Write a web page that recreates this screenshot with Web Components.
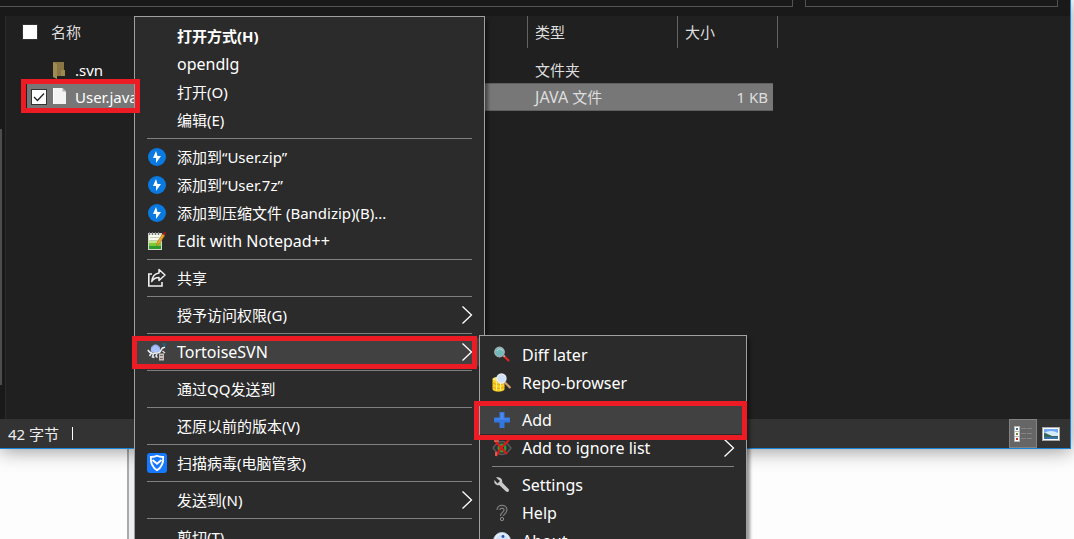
<!DOCTYPE html>
<html lang="zh-CN">
<head>
<meta charset="utf-8">
<title>文件资源管理器</title>
<style>
html, body { height: 100%; margin: 0; }
body {
  overflow: hidden;
  background: #fdfdfd;
  font: 15px/20px "Noto Sans", "Noto Sans CJK SC", sans-serif;
  color: #fff;
}
</style>
</head>
<body>
<desktop-view></desktop-view>

<script>
const ICONS = {
  zip: `<circle cx="10" cy="10" r="9" fill="#0a7ae0"/><path d="M9 4 6 11h3v5l5-7h-3.500z" fill="#fff"/>`,
  notepad: `<path d="M1 2h14v17H1z" fill="#d5d8d0"/><path d="M2 4h12v14H2z" fill="#f8fbee"/><path d="M2 9h12v4H2z" fill="#c6e88a"/><path d="M2 12h12v3H2z" fill="#7cc93c"/><path d="M2 15h12v3H2z" fill="#2f9a2c"/><path d="M3 6.500h9M3 9.500h8" stroke="#c3cdb8"/><path d="M2.500 1v3M5.500 1v3M8.500 1v3M11.500 1v3" stroke="#777"/><path d="m9.500 15 .8-4 5.200-8 2.200 1.500-5.200 8z" fill="#efa72b" stroke="#a06a1a" stroke-width=".6"/><path d="m15.800 2.800 1.300-1.900L19.200 2l-1.400 2.200z" fill="#b5161f"/>`,
  share: `<path d="M5 6H1.800v12H15v-4" fill="none" stroke="#eee" stroke-width="1.600"/><path d="M12 1.500 18 7l-6 5.500V9.500c-3.500 0-5.500 1-7.200 4C5.300 8.500 8 5.500 12 5z" fill="none" stroke="#eee" stroke-width="1.500" stroke-linejoin="round"/>`,
  tortoise: `<path d="M4 9.500C3 5 5.500 2.800 8.500 2.800S14 5 13 9.500L8.500 11z" fill="#a9c2fb"/><path d="M4.500 6.500C5.500 4 7 3 8.500 3s3 1 4 3.500" fill="none" stroke="#7f9ae0"/><path d="M.8 8c1 1.700 2 2.500 4 3 3 .6 6 .4 8-.8l2.500-4L18 5" fill="none" stroke="#eef1f5" stroke-width="1.500"/><path d="M4.500 11 2.500 14M6.500 11.500 5.500 15l2 .5M10 12l-1 2 1.500 1.500" fill="none" stroke="#e3e6ec" stroke-width="1.600"/><path d="m15.500 2 1-1.200 2.500.5-.5 3-2 .5z" fill="#23607e"/><path d="m15.500 9 2.500 2" stroke="#dfe5ee" stroke-width="1.300"/><path d="M12 11.500h5v7h-5z" fill="#c9c0bd"/><path d="M13 13.500h3m-3 3h3" stroke="#786d69"/>`,
  shield: `<rect width="20" height="20" rx="3" fill="#1677ff"/><path d="M10 2.800c2 1 4 1.300 6.200 1.200.3 6-1.600 10.500-6.200 13.200C5.400 14.500 3.500 10 3.800 4 6 4.100 8 3.800 10 2.800z" fill="none" stroke="#fff" stroke-width="1.800"/><path d="m5.500 7 4.500 3.800L14.500 7" fill="none" stroke="#fff" stroke-width="2"/>`,
  diff: `<circle cx="7.500" cy="7" r="4.800" fill="#72b9bc" stroke="#a9b0b1" stroke-width="1.200"/><path d="M5 6c1-2.500 4-3 6 0" fill="none" stroke="#bde1e2"/><path d="m12 11 5 5" stroke="#e32620" stroke-width="2.200"/><path d="m11.500 10.500 1.300 1.300" stroke="#aaa" stroke-width="2"/>`,
  repo: `<path d="M.5 6v10c0 3.500 12 3.500 12 0V6z" fill="#f9ce25"/><ellipse cx="6.500" cy="6" rx="6" ry="2.200" fill="#ffe978"/><path d="M.5 9.500c1.500 2.500 10.500 2.500 12 0M.5 13.500c1.500 2.500 10.500 2.500 12 0" fill="none" stroke="#dba813"/><path d="M4.500 8.500v9M8.500 8.500v9" stroke="#ffed85"/><path d="m13 9.500 5.500 5.500" stroke="#d0a072" stroke-width="2.200"/><circle cx="9.500" cy="5.500" r="4.500" fill="#cfe0fb" stroke="#eaedf0" stroke-width="1.300"/>`,
  add: `<path d="M7.500 2h5v5.500H18v5h-5.500V18h-5v-5.500H2v-5h5.500z" fill="#3277df"/><path d="M8.500 3h3v5.500H17v1H3v-1h5.500z" fill="#4f88ea"/>`,
  ignore: `<path d="M1 10q9-13 18 0-9 13-18 0z" fill="#303030" stroke="#595959" stroke-width="1.400"/><circle cx="10" cy="10" r="4.500" fill="#1fa03c"/><circle cx="10" cy="10" r="2.200" fill="#173b20"/><path d="m3 3 12 13M17 2 9 10l-5 8" fill="none" stroke="#e11919" stroke-width="2.200"/><path d="M2 3h5M4 14v4" stroke="#ef6b5b" stroke-width="1.600"/>`,
  wrench: `<path d="M4 2.500 8 6 5.500 8.500 2.500 5c-1 3 1.500 6 5 5.200l6.500 6.300c2 1.500 4-.8 2.500-2.500L10.200 7.500C11 4 7.500 1.500 4 2.500z" fill="#c9c9c9"/>`,
  help: `<path d="M6.500 7c0-4.500 7-4.500 7 0 0 3-3.500 3-3.500 6" fill="none" stroke="#8a8a8a" stroke-width="4"/><path d="M6.500 7c0-4.500 7-4.500 7 0 0 3-3.500 3-3.500 6" fill="none" stroke="#353535" stroke-width="2"/><circle cx="10" cy="16" r="1.700" fill="#353535" stroke="#8a8a8a"/>`,
  info: `<circle cx="10" cy="10" r="8.500" fill="#e9f1fb" stroke="#b7cbe5"/><circle cx="10" cy="10" r="6.500" fill="#cfe0f8"/><circle cx="11" cy="5.500" r="1.400" fill="#1d50bd"/><path d="M8 9h2.500L9 15h3" fill="none" stroke="#1d50bd" stroke-width="2"/>`,
  folder: `<path d="M3 2h11v14H3z" fill="#8a7642"/><path d="m3 2 4 2v15l-4-2z" fill="#a18b55"/><path d="M11 10h4v6h-4z" fill="#9e884e"/>`,
  file: `<path d="M3 1h9.500L16 4.500V17H3z" fill="#f3f3f3"/><path d="M12.500 1v3.500H16z" fill="#aeb2b5"/><path d="M3 1h1v16H3z" fill="#fff"/>`,
  details: `<path d="M1 2h6v16H1z" fill="#b9b9b9"/><path d="M2 3h4v4H2zm0 5h4v4H2zm0 5h4v4H2z" fill="#fff"/><path d="M3 4h2v2H3z" fill="#3b719b"/><path d="M3 9h2v2H3z" fill="#788137"/><path d="M3 14h2v2H3z" fill="#bd3020"/><path d="M8 4.500h5m1 0h5M8 9.500h5m1 0h5M8 14.500h5m1 0h5" stroke="#858585"/>`,
  picture: `<path d="M1 3h18v14H1z" fill="#aaa"/><path d="M2 4h16v12H2z" fill="#fff"/><path d="M3 5h14v10H3z" fill="#72a9f3"/><path d="M3 9q7-4 14 0v4H3z" fill="#d5ebf8"/><path d="M3 9c3 0 5 2 8 3h6v1H3z" fill="#3a6657"/><path d="M3 13h14v2H3z" fill="#3774a9"/>`
};

function define(name, css, html, setup) {
  const template = document.createElement('template');
  template.innerHTML = `<style>${css}</style>${html}`;
  customElements.define(name, class extends HTMLElement {
    constructor() {
      super();
      this.attachShadow({ mode: 'open' }).append(template.content.cloneNode(true));
    }
    connectedCallback() { if (setup) setup(this, this.shadowRoot); }
  });
}

define('app-icon',
  `:host { display: block; width: 20px; height: 20px; flex: none; } svg { display: block; }`,
  `<svg width="20" height="20" viewBox="0 0 20 20" aria-hidden="true"></svg>`,
  (host, root) => { root.querySelector('svg').innerHTML = ICONS[host.getAttribute('name')] || ''; });

define('menu-rule',
  `:host { display: block; padding: 4px 12px; } hr { border: 0; height: 1px; margin: 0; background: #808080; }`,
  `<hr>`);

/* Red annotation frame laid over the element that holds it. */
define('mark-frame',
  `:host { position: absolute; z-index: 2; box-sizing: border-box; border: 5px solid #ed1c24; pointer-events: none; }`, ``);

define('menu-item', `
  :host { display: block; position: relative; }
  button { display: flex; align-items: center; box-sizing: border-box; width: 100%; height: 28px; padding: 0 12px;
    border: 0; background: none; color: inherit; font: inherit; text-align: left; }
  :host([active]) button { background: #414141; }
  :host([default]) button { font-weight: 700; }
  :host([lang="en"]) button { font-size: 16px; }
  .icon { display: flex; width: 30px; flex: none; }
  .label { flex: 1; white-space: nowrap; }
  .arrow { display: none; margin-right: -1px; }
  :host([submenu]) .arrow { display: block; }`,
  `<button type="button" role="menuitem"><span class="icon"><slot name="icon"></slot></span><span class="label"><slot></slot></span>
   <svg class="arrow" width="12" height="20" viewBox="0 0 12 20" aria-hidden="true"><path d="m1.500 1.500 9 8.500-9 8.500" fill="none" stroke="#fff" stroke-width="1.300"/></svg></button><slot name="mark"></slot>`);

define('popup-menu', `
  :host { display: block; box-sizing: border-box; border: 1px solid #a0a0a0; padding: 5px 0; background: #2b2b2b; color: #fff;
    box-shadow: 3px 4px 3px rgba(0, 0, 0, .4); }`,
  `<div role="menu"><slot></slot></div>`);

define('file-table', `
  :host { display: block; position: relative; flex: 1; }
  table { table-layout: fixed; width: 772px; border-collapse: separate; border-spacing: 0; }
  .gutter { width: 21px; } .name { width: 500px; } .type { width: 150px; } .size { width: 96px; } .end { width: 5px; }
  th, td { padding: 0; font-weight: 400; text-align: left; white-space: nowrap; color: #dedede; }
  th { height: 32px; }
  th + th { border-left: 1px solid #636363; padding-left: 7px; }
  th:last-child { border-right: 1px solid #636363; }
  tbody td { height: 27px; }
  tbody::before { content: ""; display: table-row; height: 8px; }
  td:nth-child(3) { padding-left: 8px; }
  td:nth-child(4) { padding-right: 5px; text-align: right; }
  .selected td:not(:first-child, :last-child) { background: #777; border: 1px solid #606060; border-width: 1px 0; height: 26px; }
  .latin { font-size: 16px; }
  .cell { display: flex; align-items: center; color: #fff; }
  th .cell { padding-left: 16px; gap: 13px; color: #dedede; }
  td .cell { padding-left: 4px; gap: 0; }
  td app-icon { margin: 0 5px 0 3px; }
  .blank { width: 16px; }
  input { appearance: none; box-sizing: border-box; width: 16px; height: 16px; margin: 0; border: 1px solid #333; background: #fff; }
  input:checked { background: #fff url("data:image/svg+xml,%3Csvg xmlns='http://www.w3.org/2000/svg' viewBox='0 0 14 14'%3E%3Cpath d='m2 7 3.500 3.500L12 3.500' fill='none' stroke='%23222' stroke-width='1.300'/%3E%3C/svg%3E"); }`, `
  <table>
    <colgroup><col class="gutter"><col class="name"><col class="type"><col class="size"><col class="end"></colgroup>
    <thead><tr>
      <th colspan="2"><div class="cell"><input type="checkbox" id="all"><label for="all">名称</label></div></th>
      <th>类型</th><th colspan="2">大小</th>
    </tr></thead>
    <tbody>
      <tr><td></td><td><div class="cell"><span class="blank"></span><app-icon name="folder"></app-icon>.svn</div></td><td>文件夹</td><td></td><td></td></tr>
      <tr class="selected"><td></td><td><div class="cell"><input type="checkbox" id="user" checked><app-icon name="file"></app-icon><label for="user">User.java</label></div></td><td><span class="latin">JAVA </span>文件</td><td>1 KB</td><td></td></tr>
    </tbody>
  </table>`);

define('status-bar', `
  :host { display: flex; align-items: stretch; height: 29px; background: #333; color: #eee; }
  .count { display: flex; align-items: center; flex: 1; padding-left: 8px; gap: 13px; }
  .count i { width: 1px; height: 13px; background: #fff; }
  .views { display: flex; padding-right: 5px; }
  button { display: flex; align-items: center; justify-content: center; box-sizing: border-box; width: 28px; padding: 0; border: 0; background: none; }
  button.on { background: #666; border: 1px solid #838383; }`, `
  <div class="count"><span>42 字节</span><i></i></div>
  <div class="views">
    <button type="button" class="on" aria-label="详细信息"><app-icon name="details"></app-icon></button>
    <button type="button" aria-label="大图标"><app-icon name="picture"></app-icon></button>
  </div>`);

define('explorer-window', `
  :host { display: flex; flex-direction: column; border: solid #1883d7; border-width: 0 1px 1px 0; background: #202020;
    box-shadow: 0 2px 18px rgba(0, 0, 0, .4); }
  .top { display: flex; gap: 12px; height: 16px; padding-right: 12px; background: #191919; }
  .box { box-sizing: border-box; height: 7px; border: 1px solid #535353; border-top: 0; }
  .address { flex: 1; border-left: 0; } .search { width: 253px; }
  .main { flex: 1; display: flex; }
  .nav { box-sizing: border-box; width: 6px; padding: 113px 0 34px; background: #191919; border-right: 1px solid #2b2b2b; }
  .thumb { width: 2px; height: 100%; background: #4d4d4d; }`, `
  <div class="top"><div class="box address"></div><div class="box search"></div></div>
  <div class="main"><div class="nav"><div class="thumb"></div></div><file-table></file-table></div>
  <status-bar></status-bar>`);

define('desktop-view', `
  :host { display: grid; grid-template-rows: 1fr 90px; height: 100%; position: relative; background: #fdfdfd; }
  explorer-window { margin-right: 3px; position: relative; }
  .page { display: flex; }
  .edge { width: 127px; border-right: 2px solid #aaa; }
  .paper { flex: 1; background: #fdfdfd; }
  .gap { width: 6px; background: #eceff1; }
  popup-menu { position: absolute; }
  .main-menu { left: 134px; top: 16px; width: 351px; }
  .svn-menu { left: 479px; top: 335px; width: 268px; z-index: 1; }
  .row-mark { left: 21px; top: 79px; width: 119px; height: 34px; }
  .svn-mark { left: -3px; top: -2px; width: 345px; height: 33px; }
  .add-mark { left: -6px; top: -5px; width: 273px; height: 39px; }`, `
  <explorer-window></explorer-window>
  <div class="page"><div class="edge"></div><div class="gap"></div><div class="paper"></div></div>
  <popup-menu class="main-menu">
    <menu-item default>打开方式(H)</menu-item>
    <menu-item lang="en">opendlg</menu-item>
    <menu-item>打开(O)</menu-item>
    <menu-item>编辑(E)</menu-item>
    <menu-rule></menu-rule>
    <menu-item><app-icon slot="icon" name="zip"></app-icon>添加到“User.zip”</menu-item>
    <menu-item><app-icon slot="icon" name="zip"></app-icon>添加到“User.7z”</menu-item>
    <menu-item><app-icon slot="icon" name="zip"></app-icon>添加到压缩文件 (Bandizip)(B)...</menu-item>
    <menu-item lang="en"><app-icon slot="icon" name="notepad"></app-icon>Edit with Notepad++</menu-item>
    <menu-rule></menu-rule>
    <menu-item><app-icon slot="icon" name="share"></app-icon>共享</menu-item>
    <menu-rule></menu-rule>
    <menu-item submenu>授予访问权限(G)</menu-item>
    <menu-rule></menu-rule>
    <menu-item lang="en" submenu active><app-icon slot="icon" name="tortoise"></app-icon>TortoiseSVN<mark-frame slot="mark" class="svn-mark"></mark-frame></menu-item>
    <menu-rule></menu-rule>
    <menu-item>通过QQ发送到</menu-item>
    <menu-rule></menu-rule>
    <menu-item>还原以前的版本(V)</menu-item>
    <menu-rule></menu-rule>
    <menu-item><app-icon slot="icon" name="shield"></app-icon>扫描病毒(电脑管家)</menu-item>
    <menu-rule></menu-rule>
    <menu-item submenu>发送到(N)</menu-item>
    <menu-rule></menu-rule>
    <menu-item>剪切(T)</menu-item>
  </popup-menu>
  <popup-menu class="svn-menu">
    <menu-item lang="en"><app-icon slot="icon" name="diff"></app-icon>Diff later</menu-item>
    <menu-item lang="en"><app-icon slot="icon" name="repo"></app-icon>Repo-browser</menu-item>
    <menu-rule></menu-rule>
    <menu-item lang="en" active><app-icon slot="icon" name="add"></app-icon>Add<mark-frame slot="mark" class="add-mark"></mark-frame></menu-item>
    <menu-item lang="en" submenu><app-icon slot="icon" name="ignore"></app-icon>Add to ignore list</menu-item>
    <menu-rule></menu-rule>
    <menu-item lang="en"><app-icon slot="icon" name="wrench"></app-icon>Settings</menu-item>
    <menu-item lang="en"><app-icon slot="icon" name="help"></app-icon>Help</menu-item>
    <menu-item lang="en"><app-icon slot="icon" name="info"></app-icon>About</menu-item>
  </popup-menu>
  <mark-frame class="row-mark"></mark-frame>`);
</script>
</body>
</html>
